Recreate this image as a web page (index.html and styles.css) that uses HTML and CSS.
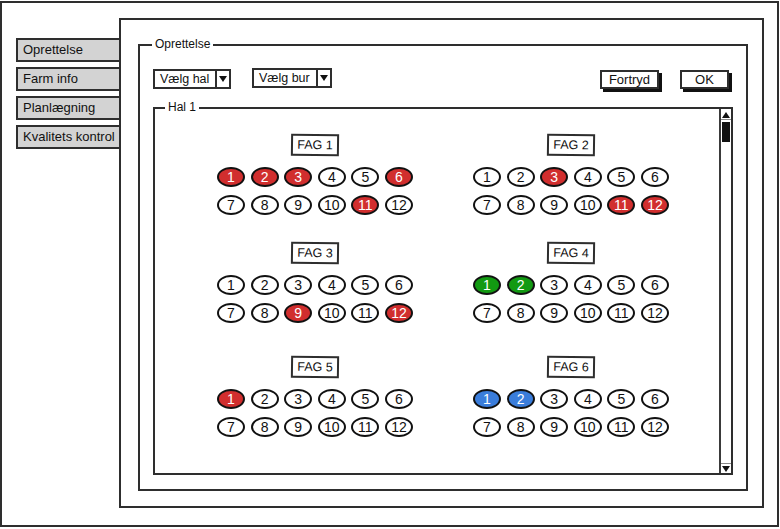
FILE: index.html
```html
<!DOCTYPE html>
<html lang="da">
<head>
<meta charset="utf-8">
<title>Oprettelse</title>
<link rel="stylesheet" href="styles.css">
</head>
<body>
<div class="frame">
  <nav class="tabs">
    <div class="tab">Oprettelse</div>
    <div class="tab">Farm info</div>
    <div class="tab">Planlægning</div>
    <div class="tab">Kvalitets kontrol</div>
  </nav>
  <main class="panel">
    <section class="fieldset">
      <span class="legend">Oprettelse</span>
      <div class="toolbar">
        <div class="dropdown"><span class="dd-label">Vælg hal</span><span class="dd-arrow"><i class="tri-down"></i></span></div>
        <div class="dropdown dropdown-bur"><span class="dd-label">Vælg bur</span><span class="dd-arrow"><i class="tri-down"></i></span></div>
        <button class="btn btn-first">Fortryd</button>
        <button class="btn btn-ok">OK</button>
      </div>
      <div class="hal">
        <span class="legend legend-hal">Hal 1</span>
        <div class="hal-content">
          <div class="fag-grid">
            <div class="fag">
              <div class="fag-label">FAG 1</div>
              <div class="seats">
                <span class="seat red">1</span><span class="seat red">2</span><span class="seat red">3</span><span class="seat">4</span><span class="seat">5</span><span class="seat red">6</span>
                <span class="seat">7</span><span class="seat">8</span><span class="seat">9</span><span class="seat">10</span><span class="seat red">11</span><span class="seat">12</span>
              </div>
            </div>
            <div class="fag">
              <div class="fag-label">FAG 2</div>
              <div class="seats">
                <span class="seat">1</span><span class="seat">2</span><span class="seat red">3</span><span class="seat">4</span><span class="seat">5</span><span class="seat">6</span>
                <span class="seat">7</span><span class="seat">8</span><span class="seat">9</span><span class="seat">10</span><span class="seat red">11</span><span class="seat red">12</span>
              </div>
            </div>
            <div class="fag">
              <div class="fag-label">FAG 3</div>
              <div class="seats">
                <span class="seat">1</span><span class="seat">2</span><span class="seat">3</span><span class="seat">4</span><span class="seat">5</span><span class="seat">6</span>
                <span class="seat">7</span><span class="seat">8</span><span class="seat red">9</span><span class="seat">10</span><span class="seat">11</span><span class="seat red">12</span>
              </div>
            </div>
            <div class="fag">
              <div class="fag-label">FAG 4</div>
              <div class="seats">
                <span class="seat green">1</span><span class="seat green">2</span><span class="seat">3</span><span class="seat">4</span><span class="seat">5</span><span class="seat">6</span>
                <span class="seat">7</span><span class="seat">8</span><span class="seat">9</span><span class="seat">10</span><span class="seat">11</span><span class="seat">12</span>
              </div>
            </div>
            <div class="fag">
              <div class="fag-label">FAG 5</div>
              <div class="seats">
                <span class="seat red">1</span><span class="seat">2</span><span class="seat">3</span><span class="seat">4</span><span class="seat">5</span><span class="seat">6</span>
                <span class="seat">7</span><span class="seat">8</span><span class="seat">9</span><span class="seat">10</span><span class="seat">11</span><span class="seat">12</span>
              </div>
            </div>
            <div class="fag">
              <div class="fag-label">FAG 6</div>
              <div class="seats">
                <span class="seat blue">1</span><span class="seat blue">2</span><span class="seat">3</span><span class="seat">4</span><span class="seat">5</span><span class="seat">6</span>
                <span class="seat">7</span><span class="seat">8</span><span class="seat">9</span><span class="seat">10</span><span class="seat">11</span><span class="seat">12</span>
              </div>
            </div>
          </div>
        </div>
        <div class="scrollbar">
          <span class="sb-btn"><i class="tri-up"></i></span>
          <span class="sb-thumb"></span>
          <span class="sb-track"></span>
          <span class="sb-btn"><i class="tri-down"></i></span>
        </div>
      </div>
    </section>
  </main>
</div>
</body>
</html>
```
FILE: styles.css
```css
* { box-sizing: border-box; }

html, body {
  margin: 0;
  padding: 0;
  background: #fff;
}

body {
  font-family: "Liberation Sans", Arial, sans-serif;
  color: #111;
}

.frame {
  margin-top: 1px;
  width: 779px;
  height: 526px;
  border: 2px solid #2e2e2e;
  padding: 15px 0 0 14px;
  display: flex;
  align-items: flex-start;
}

.tabs {
  margin-top: 20px;
  width: 103px;
  display: flex;
  flex-direction: column;
  gap: 5px;
}

.tab {
  height: 24px;
  background: #d3d3d3;
  border: 2px solid #2e2e2e;
  border-right: none;
  font-size: 13px;
  line-height: 20px;
  padding-left: 5px;
  white-space: nowrap;
  overflow: hidden;
}

.panel {
  width: 645px;
  height: 490px;
  border: 2px solid #2e2e2e;
  padding: 24px 14px 15px 17px;
  background: #fff;
}

.fieldset {
  position: relative;
  height: 447px;
  border: 2px solid #2e2e2e;
  padding: 23px 13px 14px;
  display: flex;
  flex-direction: column;
}

.legend {
  position: absolute;
  top: -9px;
  left: 12px;
  padding: 0 3px;
  background: #fff;
  font-size: 12px;
  line-height: 14px;
}

.legend-hal {
  left: 10px;
}

.toolbar {
  height: 20px;
  display: flex;
  align-items: center;
  padding-right: 4px;
  margin-bottom: 18px;
}

.dropdown {
  width: 78px;
  height: 20px;
  border: 2px solid #2e2e2e;
  display: flex;
  align-items: stretch;
}

.dropdown-bur {
  width: 80px;
  margin-left: 21px;
  margin-top: -2px;
}

.dd-label {
  flex: 1;
  font-size: 12.5px;
  line-height: 16px;
  padding-left: 5px;
  white-space: nowrap;
}

.dd-arrow {
  width: 14px;
  border-left: 2px solid #2e2e2e;
  display: flex;
  align-items: center;
  justify-content: center;
}

.tri-down {
  display: block;
  width: 0;
  height: 0;
  border-left: 4px solid transparent;
  border-right: 4px solid transparent;
  border-top: 6px solid #111;
}

.tri-up {
  display: block;
  width: 0;
  height: 0;
  border-left: 4px solid transparent;
  border-right: 4px solid transparent;
  border-bottom: 6px solid #111;
}

.btn {
  height: 19px;
  border: 2px solid #2e2e2e;
  background: #fff;
  box-shadow: 3px 3px 0 #111;
  font-family: "Liberation Sans", Arial, sans-serif;
  font-size: 13px;
  line-height: 15px;
  padding: 0;
  color: #111;
}

.btn-first {
  margin-left: auto;
  width: 59px;
}

.btn-ok {
  margin-left: 21px;
  width: 49px;
}

.hal {
  position: relative;
  height: 368px;
  border: 2px solid #2e2e2e;
  display: flex;
}

.hal-content {
  flex: 1;
  padding: 25px 0 0 62px;
}

.fag-grid {
  display: grid;
  grid-template-columns: 196px 196px;
  grid-template-rows: 108px 114px auto;
  column-gap: 60px;
}

.fag {
  display: flex;
  flex-direction: column;
  align-items: center;
}

.fag-label {
  width: 48px;
  height: 22px;
  border: 2px solid #2e2e2e;
  font-size: 12.5px;
  line-height: 18px;
  text-align: center;
  margin-bottom: 11px;
  transform: rotate(0.8deg);
}

.seats {
  display: grid;
  grid-template-columns: repeat(6, 28px);
  column-gap: 5.6px;
  row-gap: 8px;
}

.seat {
  width: 28px;
  height: 20px;
  border: 2px solid #111;
  border-radius: 50%;
  background: #fff;
  font-size: 14px;
  line-height: 16px;
  text-align: center;
  color: #111;
}

.seat.red {
  background: #d12e2e;
  color: #fff;
}

.seat.green {
  background: #129a12;
  color: #fff;
}

.seat.blue {
  background: #3a7ddb;
  color: #fff;
}

.scrollbar {
  width: 12px;
  border-left: 2px solid #3a3a3a;
  display: flex;
  flex-direction: column;
  align-items: center;
  padding: 1px 0 0;
}

.sb-btn {
  width: 10px;
  height: 10px;
  display: flex;
  align-items: center;
  justify-content: center;
  border-bottom: 1px solid #888;
}

.sb-btn:last-child {
  border-bottom: none;
  border-top: 1px solid #888;
}

.sb-thumb {
  margin-top: 2px;
  width: 8px;
  height: 20px;
  background: #111;
}

.sb-track {
  flex: 1;
}
```
